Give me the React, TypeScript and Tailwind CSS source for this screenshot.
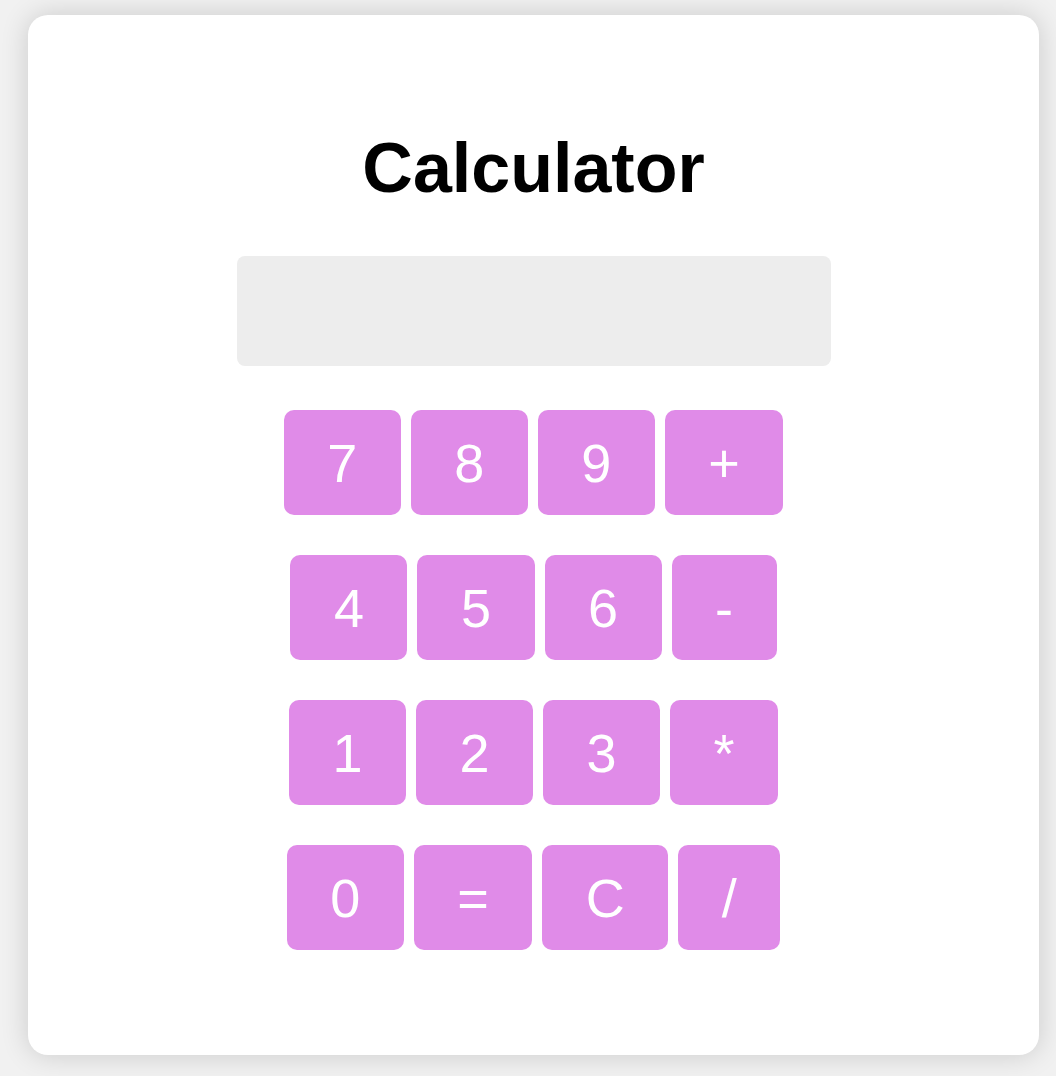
const rows = [
  ["7", "8", "9", "+"],
  ["4", "5", "6", "-"],
  ["1", "2", "3", "*"],
  ["0", "=", "C", "/"],
];

export default function App() {
  return (
    <main className="min-h-screen w-full bg-[#f1f1f1] pl-[28px] pt-[15px] font-['Liberation_Sans',Arial,sans-serif]">
      <div className="w-[1011px] h-[1040px] bg-white rounded-[20px] shadow-[0_0_28px_rgba(0,0,0,0.16)] flex flex-col items-center pt-[113px]">
        <h1 className="text-[70px] font-bold text-black leading-[80px]">Calculator</h1>
        <div className="mt-[48px] w-[594px] h-[110px] bg-[#ededed] rounded-[8px]" />
        <div className="mt-[44px] flex flex-col gap-[40px]">
          {rows.map((row, i) => (
            <div key={i} className="flex justify-center gap-[10px]">
              {row.map((k) => (
                <button
                  key={k}
                  className="h-[105px] px-[43.5px] bg-[#e08be8] text-white text-[54px] leading-none rounded-[10px]"
                >
                  {k}
                </button>
              ))}
            </div>
          ))}
        </div>
      </div>
    </main>
  );
}
